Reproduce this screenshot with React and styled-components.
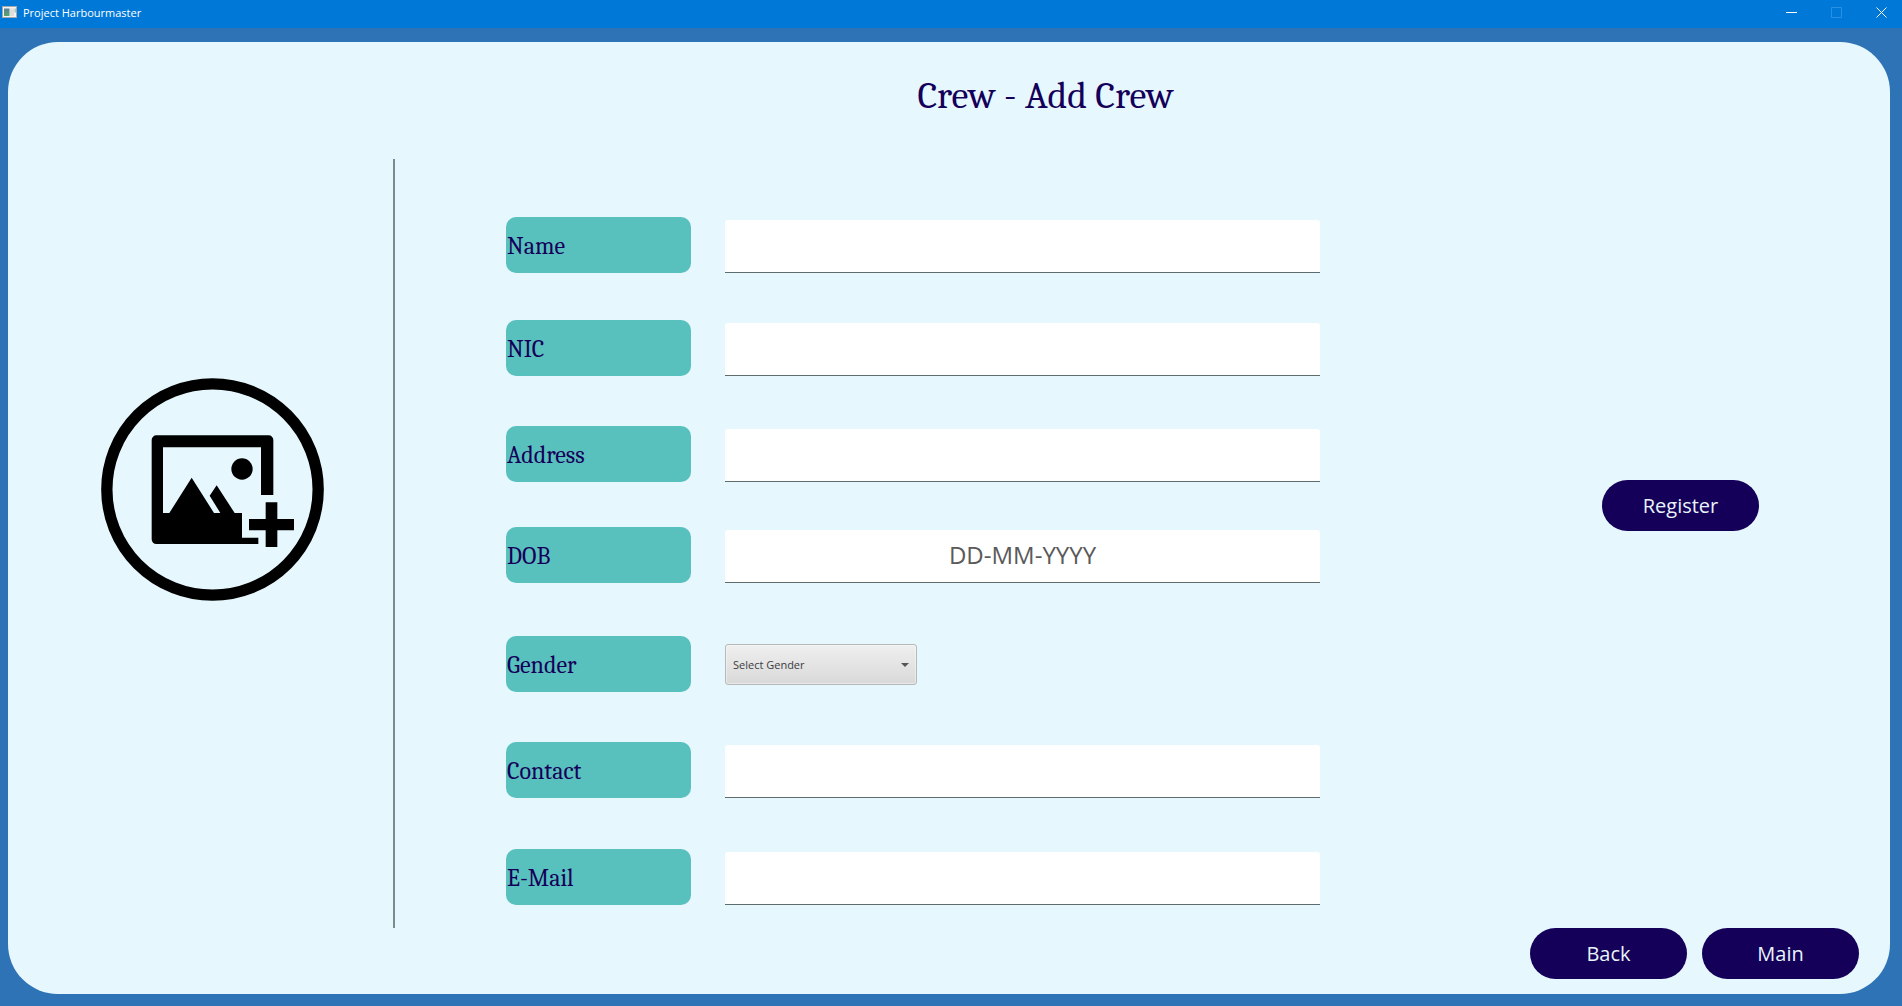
import React from "react";
import styled, { createGlobalStyle } from "styled-components";

const navy = "#140059";
const teal = "#59c1bd";
const uiFont = `"Open Sans", "Noto Sans", sans-serif`;
const serifFont = `Cambria, "Liberation Serif", serif`;

const GlobalStyle = createGlobalStyle`
  *, *::before, *::after { box-sizing: border-box; }
  body { margin: 0; font-family: ${uiFont}; }
  button, input, select { font-family: inherit; }
`;

const Window = styled.div`
  display: flex;
  flex-direction: column;
  min-height: 100vh;
  background: #2d73b5;
`;

const TitleBar = styled.header`
  display: flex;
  align-items: center;
  height: 28px;
  padding-left: 2px;
  background: #0078d7;
  color: #fff;
`;

const AppName = styled.span`
  flex: 1;
  padding: 0 0 3px 6px;
  font-size: 11px;
  line-height: 16px;
`;

const AppIcon = styled.svg`
  display: block;
  margin-bottom: 4px;
`;

const WindowButton = styled.button`
  display: flex;
  justify-content: center;
  align-items: center;
  width: 45px;
  height: 28px;
  padding: 0 0 4px 3px;
  border: 0;
  background: transparent;
  color: #fff;

  &:disabled { color: #2b90e2; }
`;

const Card = styled.main`
  display: flex;
  flex-direction: column;
  flex: 1;
  margin: 14px 12px 12px 8px;
  border-radius: 50px;
  background: #e6f8fd;
`;

const Heading = styled.h1`
  margin: 0;
  padding: 32px 0 41px 193px;
  color: ${navy};
  font: 400 38px/44px ${serifFont};
  text-align: center;
`;

const Body = styled.div`
  display: flex;
  flex: 1;
`;

const PhotoPane = styled.section`
  display: flex;
  justify-content: center;
  align-items: flex-start;
  width: 387px;
  padding: 219px 0 0 24px;
  border-right: 2px solid #7d8a8c;
`;

const PhotoButton = styled.button`
  padding: 0;
  border: 0;
  border-radius: 50%;
  background: transparent;
  color: #000;

  svg { display: block; }
`;

const Form = styled.form`
  display: grid;
  flex: 1;
  grid-template-rows: 103px 106px 101px 109px 106px 107px 56px;
  padding: 58px 151px 0 111px;
`;

const Field = styled.div`
  display: flex;
  align-items: ${(p) => (p.$middle ? "center" : "flex-end")};
  gap: 34px;
  height: 56px;
`;

const FieldLabel = styled.label`
  width: 185px;
  padding: 2px 0 0 1px;
  border-radius: 10px;
  background: ${teal};
  color: ${navy};
  font: 400 24px/54px ${serifFont};
`;

const TextInput = styled.input`
  flex: 1;
  min-width: 0;
  height: 53px;
  padding: 0 10px 3px;
  border: 0;
  border-bottom: 1px solid #5f6c6e;
  border-radius: 3px 3px 0 0;
  background: #fff;
  color: #333;
  font-size: 24px;
  text-align: center;

  &::placeholder { color: #5a5a5a; opacity: 1; }
`;

const SelectBox = styled.div`
  position: relative;
  width: 192px;
`;

const Select = styled.select`
  appearance: none;
  display: block;
  width: 100%;
  height: 41px;
  padding: 0 28px 0 7px;
  border: 1px solid #b5b9ba;
  border-radius: 3px;
  background: linear-gradient(#efefef, #d9d9d9);
  box-shadow: inset 0 0 0 1px rgba(255, 255, 255, 0.4);
  color: #3c3c3c;
  font-size: 11px;
`;

const Arrow = styled.svg`
  position: absolute;
  top: 19px;
  right: 8px;
  pointer-events: none;
`;

const ActionPane = styled.aside`
  display: flex;
  justify-content: center;
  align-items: flex-start;
  width: 419px;
  padding-top: 321px;
`;

const PillButton = styled.button`
  width: 157px;
  height: 51px;
  padding: 0;
  border: 0;
  border-radius: 26px;
  background: ${navy};
  color: #e8f4fa;
  font-size: 20px;
  line-height: 28px;
`;

const Footer = styled.footer`
  display: flex;
  justify-content: flex-end;
  gap: 15px;
  padding: 0 31px 15px;
`;

const fields = [
  { id: "name", label: "Name" },
  { id: "nic", label: "NIC" },
  { id: "address", label: "Address" },
  { id: "dob", label: "DOB", placeholder: "DD-MM-YYYY" },
  { id: "gender", label: "Gender", options: ["Male", "Female"], prompt: "Select Gender" },
  { id: "contact", label: "Contact", type: "tel" },
  { id: "email", label: "E-Mail", type: "email" },
];

function AddPhotoIcon() {
  return (
    <svg width="223" height="223" viewBox="63 52 669 669" fill="currentColor" aria-hidden="true">
      <circle cx="397.5" cy="386.5" r="317" fill="none" stroke="currentColor" strokeWidth="34" />
      <path d="M229 224H566a14 14 0 0 1 14 14V403H543V260H249V457H268L335 351L402 457H421L389 405L410 374L464 457H486V531H535V550H229a14 14 0 0 1-14-14V238a14 14 0 0 1 14-14Z" />
      <circle cx="486" cy="325" r="32" />
      <path d="M557 425H592V475H642V509H592V559H557V509H507V475H557Z" />
    </svg>
  );
}

function FormField({ id, label, type = "text", placeholder, options, prompt }) {
  return (
    <Field $middle={Boolean(options)}>
      <FieldLabel htmlFor={id}>{label}</FieldLabel>
      {options ? (
        <SelectBox>
          <Select id={id} defaultValue="">
            <option value="" disabled>{prompt}</option>
            {options.map((o) => <option key={o}>{o}</option>)}
          </Select>
          <Arrow width="8" height="4" viewBox="0 0 8 4" aria-hidden="true">
            <path d="M0 0H8L4 4Z" fill="#555" />
          </Arrow>
        </SelectBox>
      ) : (
        <TextInput id={id} type={type} placeholder={placeholder} />
      )}
    </Field>
  );
}

export default function App() {
  return (
    <Window>
      <GlobalStyle />
      <TitleBar>
        <AppIcon width="15" height="12" viewBox="0 0 15 12" aria-hidden="true">
          <defs>
            <linearGradient id="pane" x1="0" y1="0" x2="0" y2="1">
              <stop offset="0" stopColor="#5d7f9c" />
              <stop offset="1" stopColor="#55a868" />
            </linearGradient>
          </defs>
          <rect x="0.5" y="0.5" width="14" height="11" fill="#f3f3f1" stroke="#a4a9ab" />
          <rect x="2" y="2.5" width="5.5" height="7.5" fill="url(#pane)" />
          <rect x="8" y="2.5" width="4" height="7.5" fill="#dedede" />
          <rect x="12.5" y="2.5" width="1.5" height="4" fill="#a9c9b4" />
        </AppIcon>
        <AppName>Project Harbourmaster</AppName>
        <WindowButton aria-label="Minimize">
          <svg width="11" height="11" viewBox="0 0 11 11"><path d="M0 5.5H11" stroke="currentColor" /></svg>
        </WindowButton>
        <WindowButton aria-label="Maximize" disabled>
          <svg width="11" height="11" viewBox="0 0 11 11"><path d="M.5.5H10.5V10.5H.5Z" fill="none" stroke="currentColor" /></svg>
        </WindowButton>
        <WindowButton aria-label="Close">
          <svg width="11" height="11" viewBox="0 0 11 11"><path d="M.5.5L10.5 10.5M10.5.5L.5 10.5" stroke="currentColor" /></svg>
        </WindowButton>
      </TitleBar>

      <Card>
        <Heading>Crew - Add Crew</Heading>
        <Body>
          <PhotoPane>
            <PhotoButton type="button" aria-label="Add photo"><AddPhotoIcon /></PhotoButton>
          </PhotoPane>
          <Form id="crew-form" onSubmit={(e) => e.preventDefault()}>
            {fields.map((f) => <FormField key={f.id} {...f} />)}
          </Form>
          <ActionPane>
            <PillButton type="submit" form="crew-form">Register</PillButton>
          </ActionPane>
        </Body>
        <Footer>
          <PillButton type="button">Back</PillButton>
          <PillButton type="button">Main</PillButton>
        </Footer>
      </Card>
    </Window>
  );
}
